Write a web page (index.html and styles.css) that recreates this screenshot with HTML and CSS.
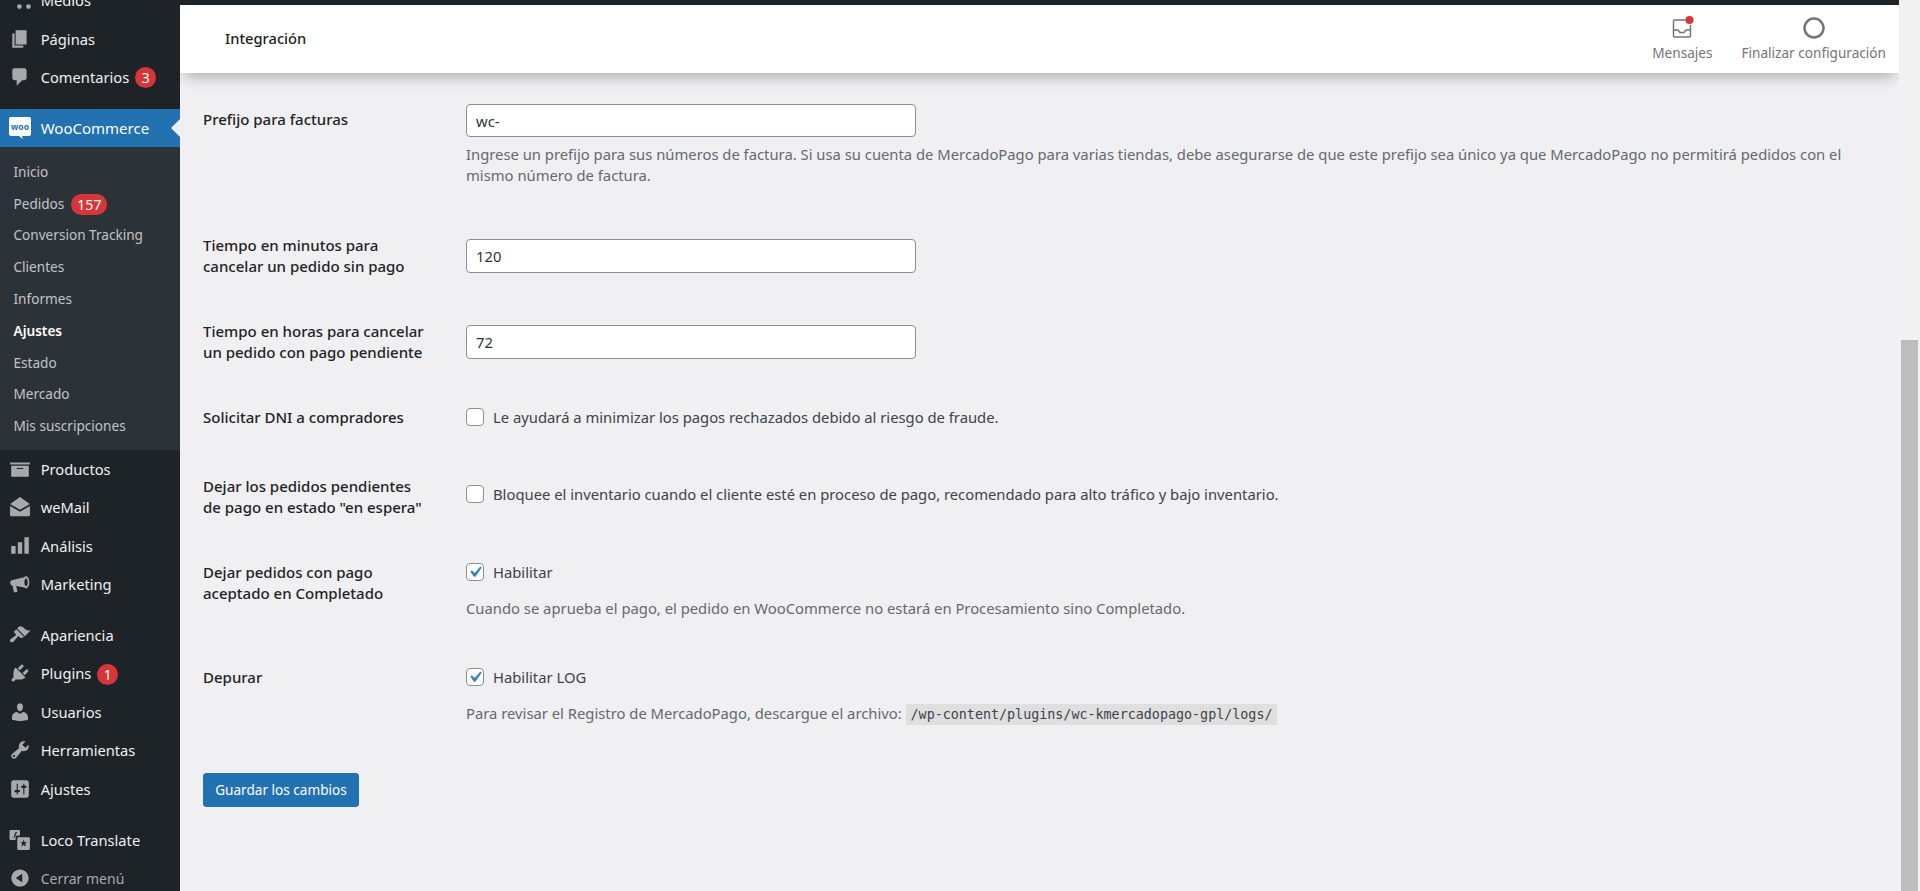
FILE: index.html
```html
<!DOCTYPE html>
<html lang="es">
<head>
<meta charset="utf-8">
<title>Integración</title>
<link rel="stylesheet" href="styles.css">
</head>
<body>
<div class="page">
  <nav class="sidebar">
    <ul class="menu">
      <li class="item"><svg class="ico" viewBox="0 0 20 20"><path d="M9.500 13.800a2.200 2.200 0 1 1 0 4.400 2.200 2.200 0 0 1 0-4.400zm8.200 0a2.200 2.200 0 1 1 0 4.400 2.200 2.200 0 0 1 0-4.400z"/></svg><span>Medios</span></li>
      <li class="item"><svg class="ico" viewBox="0 0 20 20"><path d="M6 15V2h10v13H6zm-1 1h8v2H3V5h2v11z"/></svg><span>Páginas</span></li>
      <li class="item"><svg class="ico" viewBox="0 0 20 20"><path d="M5 2h9c1.100 0 2 .9 2 2v7c0 1.100-.9 2-2 2h-2l-5 5v-5H5c-1.100 0-2-.9-2-2V4c0-1.100.9-2 2-2z"/></svg><span>Comentarios</span><b class="badge">3</b></li>
      <li class="sep"></li>
      <li class="item active"><svg class="ico" viewBox="0 0 22 22"><path class="woo-bg" d="M2 0h18a2 2 0 0 1 2 2v15a2 2 0 0 1-2 2h-7l1 3-4-3H2a2 2 0 0 1-2-2V2a2 2 0 0 1 2-2z"/><text class="woo-txt" x="11" y="12.500" text-anchor="middle">woo</text></svg><span>WooCommerce</span></li>
      <li>
        <ul class="submenu">
          <li>Inicio</li>
          <li>Pedidos<b class="badge badge-wide">157</b></li>
          <li>Conversion Tracking</li>
          <li>Clientes</li>
          <li>Informes</li>
          <li class="current">Ajustes</li>
          <li>Estado</li>
          <li>Mercado</li>
          <li>Mis suscripciones</li>
        </ul>
      </li>
      <li class="item"><svg class="ico" viewBox="0 0 20 20"><path d="M19 4v2H1V4h18zM2 7h16v10H2V7zm11 3V9H7v1h6z"/></svg><span>Productos</span></li>
      <li class="item"><svg class="ico" viewBox="0 0 20 20"><path d="M10 1 19 7.200 10 12.600 1 7.200zM1 9l9 5.400L19 9v8.500a1 1 0 0 1-1 1H2a1 1 0 0 1-1-1z"/></svg><span>weMail</span></li>
      <li class="item"><svg class="ico" viewBox="0 0 20 20"><path d="M2 10h4v7H2zM8 6.500h4V17H8zM14 2h4v15h-4z"/></svg><span>Análisis</span></li>
      <li class="item"><svg class="ico" viewBox="0 0 20 20"><path fill-rule="evenodd" d="M18.500 8.500c0 3-1.300 5.500-3 5.500-.6 0-1.200-.3-1.600-.8L6.500 11.800l1.300 5.200-3.300.8-1.400-6.400C1.800 11 1 10 1 8.800c0-1.300 1-2.300 2.500-2.500L13.700 3.800C14.200 3.300 14.800 3 15.500 3c1.700 0 3 2.500 3 5.500zM15.500 5c-.8 0-1.500 1.600-1.500 3.500s.7 3.500 1.500 3.500 1.500-1.600 1.500-3.500S16.300 5 15.500 5z"/></svg><span>Marketing</span></li>
      <li class="sep"></li>
      <li class="item"><svg class="ico" viewBox="0 0 20 20"><path d="M14.480 11.060 7.410 3.990l1.500-1.500c.5-.56 2.300-.47 3.510.32 1.210.8 1.430 1.280 2.910 2.100 1.180.64 2.450 1.260 4.450.85zm-.71.71L6.700 4.700 4.930 6.470c-.39.39-.39 1.020 0 1.410l1.060 1.060c.39.39.39 1.030 0 1.420-.6.6-1.430 1.110-2.210 1.690-.35.26-.7.53-1.010.84C1.430 13.230.1 15.010 1.290 16.200c1.190 1.200 2.980-.14 4-1.500.32-.31.58-.66.84-1.010.58-.78 1.090-1.610 1.690-2.210.39-.39 1.020-.39 1.410 0l1.060 1.060c.39.39 1.020.39 1.410 0z"/></svg><span>Apariencia</span></li>
      <li class="item"><svg class="ico" viewBox="0 0 20 20"><path d="M13.110 4.360 9.870 7.600 8 5.730l3.240-3.240c.35-.34 1.050-.2 1.560.32.52.51.66 1.210.31 1.550zm-8 1.770.91-1.120 9.010 9.010-1.190.84c-.71.71-2.630 1.160-3.820 1.160H6.140L4.900 17.260c-.59.59-1.540.59-2.120 0-.59-.58-.59-1.530 0-2.120l1.240-1.240v-3.880c0-1.130.4-3.190 1.090-3.890zm7.260 3.970 3.240-3.240c.34-.35 1.040-.21 1.550.31.52.51.66 1.210.31 1.550l-3.240 3.250z"/></svg><span>Plugins</span><b class="badge">1</b></li>
      <li class="item"><svg class="ico" viewBox="0 0 20 20"><path d="M10 9.250c-2.270 0-2.730-3.440-2.730-3.440C7 4.020 7.820 2 9.970 2c2.160 0 2.980 2.020 2.710 3.810 0 0-.41 3.440-2.680 3.440zm0 2.570L12.720 10c2.390 0 4.520 2.330 4.520 4.530v2.490s-3.650 1.130-7.240 1.130c-3.650 0-7.240-1.130-7.240-1.130v-2.490c0-2.250 1.940-4.480 4.470-4.480z"/></svg><span>Usuarios</span></li>
      <li class="item"><svg class="ico" viewBox="0 0 20 20"><path d="M16.680 9.770c-1.340 1.340-3.300 1.670-4.950.99l-5.410 6.520c-.99.99-2.590.99-3.580 0s-.99-2.590 0-3.570l6.520-5.420c-.68-1.650-.35-3.610.99-4.950 1.280-1.280 3.120-1.620 4.720-1.060l-2.890 2.890 2.820 2.820 2.860-2.870c.53 1.580.18 3.390-1.080 4.650zM3.810 16.210c.4.39 1.040.39 1.430 0 .4-.4.4-1.040 0-1.430-.39-.4-1.030-.4-1.430 0-.39.39-.39 1.030 0 1.430z"/></svg><span>Herramientas</span></li>
      <li class="item"><svg class="ico" viewBox="0 0 20 20"><path d="M18 16V4c0-1.100-.9-2-2-2H4c-1.100 0-2 .9-2 2v12c0 1.100.9 2 2 2h12c1.100 0 2-.9 2-2zM8 11h1c.55 0 1 .45 1 1s-.45 1-1 1H8v1.500c0 .28-.22.5-.5.5s-.5-.22-.5-.5V13H6c-.55 0-1-.45-1-1s.45-1 1-1h1V5.500c0-.28.22-.5.5-.5s.5.22.5.5V11zm5-2h-1c-.55 0-1-.45-1-1s.45-1 1-1h1V5.500c0-.28.22-.5.5-.5s.5.22.5.5V7h1c.55 0 1 .45 1 1s-.45 1-1 1h-1v5.500c0 .28-.22.5-.5.5s-.5-.22-.5-.5V9z"/></svg><span>Ajustes</span></li>
      <li class="sep"></li>
      <li class="item"><svg class="ico" viewBox="0 0 20 20"><path fill-rule="evenodd" d="M1.500 1H9a1 1 0 0 1 1 1v4H8a2 2 0 0 0-2 2v2H1.500a1 1 0 0 1-1-1V2a1 1 0 0 1 1-1zM4 7.800 6 2.800h1.300L5.300 7.800z"/><path fill-rule="evenodd" d="M8.500 7.500H18a1 1 0 0 1 1 1V18a1 1 0 0 1-1 1H8.500a1 1 0 0 1-1-1V8.500a1 1 0 0 1 1-1zm4.800 2L12.400 12H10l2 1.500-.8 2.500 2.100-1.500 2.100 1.500-.8-2.500 2-1.500h-2.400z"/></svg><span>Loco Translate</span></li>
      <li class="item collapse"><svg class="ico" viewBox="0 0 20 20"><path d="M10 2.160c4.330 0 7.840 3.510 7.840 7.840s-3.510 7.840-7.840 7.840S2.160 14.330 2.160 10 5.710 2.160 10 2.160zm2 11.720V6.120L6.180 9.970z"/></svg><span>Cerrar menú</span></li>
    </ul>
  </nav>

  <main class="main">
    <header class="topbar">
      <h1 class="title">Integración</h1>
      <div class="actions">
        <div class="action action-msg">
          <svg class="action-ico" viewBox="0 0 24 24"><path class="line" d="M16 4H4.500a1 1 0 0 0-1 1v15a1 1 0 0 0 1 1h15a1 1 0 0 0 1-1V9"/><path class="line" d="M3.500 14h4.500l2 2.500h4l2-2.500h4.500"/><circle class="dot" cx="19.500" cy="4" r="4"/></svg>
          <span>Mensajes</span>
        </div>
        <div class="action action-cfg">
          <svg class="action-ico" viewBox="0 0 24 24"><circle class="ring" cx="12" cy="12" r="9.500"/></svg>
          <span>Finalizar configuración</span>
        </div>
      </div>
    </header>

    <form class="form">
      <div class="row row-top gap-1">
        <label class="label">Prefijo para facturas</label>
        <div class="field">
          <input class="input input-first" type="text" value="wc-">
          <p class="help help-wrap">Ingrese un prefijo para sus números de factura. Si usa su cuenta de MercadoPago para varias tiendas, debe asegurarse de que este prefijo sea único ya que MercadoPago no permitirá pedidos con el mismo número de factura.</p>
        </div>
      </div>
      <div class="row gap-2">
        <label class="label">Tiempo en minutos para<br>cancelar un pedido sin pago</label>
        <div class="field"><input class="input" type="text" value="120"></div>
      </div>
      <div class="row gap-3">
        <label class="label">Tiempo en horas para cancelar<br>un pedido con pago pendiente</label>
        <div class="field"><input class="input" type="text" value="72"></div>
      </div>
      <div class="row gap-4">
        <label class="label">Solicitar DNI a compradores</label>
        <div class="field check-line"><input class="check" type="checkbox"><span>Le ayudará a minimizar los pagos rechazados debido al riesgo de fraude.</span></div>
      </div>
      <div class="row gap-5">
        <label class="label">Dejar los pedidos pendientes<br>de pago en estado "en espera"</label>
        <div class="field check-line check-raise"><input class="check" type="checkbox"><span>Bloquee el inventario cuando el cliente esté en proceso de pago, recomendado para alto tráfico y bajo inventario.</span></div>
      </div>
      <div class="row row-top gap-6">
        <label class="label label-flush">Dejar pedidos con pago<br>aceptado en Completado</label>
        <div class="field field-flush">
          <div class="check-line"><input class="check" type="checkbox" checked><span>Habilitar</span></div>
          <p class="help help-after">Cuando se aprueba el pago, el pedido en WooCommerce no estará en Procesamiento sino Completado.</p>
        </div>
      </div>
      <div class="row row-top gap-7">
        <label class="label label-flush">Depurar</label>
        <div class="field field-flush">
          <div class="check-line"><input class="check" type="checkbox" checked><span>Habilitar LOG</span></div>
          <p class="help help-after">Para revisar el Registro de MercadoPago, descargue el archivo: <code class="code">/wp-content/plugins/wc-kmercadopago-gpl/logs/</code></p>
        </div>
      </div>
      <button class="save" type="button">Guardar los cambios</button>
    </form>
  </main>

  <div class="scrollbar"><div class="thumb"></div></div>
</div>
</body>
</html>
```
FILE: styles.css
```css
* { box-sizing: border-box; }
html, body { margin: 0; height: 891px; overflow: hidden; }
body { background: #f0f0f2; font-family: "Noto Sans", "Open Sans", sans-serif; color: #3c434a; }
ul { list-style: none; margin: 0; padding: 0; }

.page { display: flex; height: 891px; overflow: hidden; }

/* sidebar */
.sidebar { width: 180px; flex: none; background: #1d2327; overflow: hidden; }
.menu { margin-top: -19px; }
.item { position: relative; display: flex; align-items: center; height: 38.400px; padding-left: 9px; color: #f0f0f1; font-size: 14.700px; white-space: nowrap; }
.ico { width: 22px; height: 22px; flex: none; margin-right: 9.700px; fill: #a7aaad; }
.sep { height: 12.800px; }
.active { background: #2271b1; color: #fff; font-size: 15px; }
.active::after { content: ""; position: absolute; right: 0; top: 50%; margin-top: -9px; border: 9px solid transparent; border-right-color: #f0f0f2; border-left-width: 0; }
.active .ico { fill: #fff; }
.woo-bg { fill: #fff; }
.woo-txt { fill: #2271b1; font: 700 8.500px "Noto Sans", sans-serif; }
.collapse { color: #a7aaad; font-size: 14px; }
.submenu { background: #2c3338; padding: 8px 0; color: #c3c4c7; font-size: 13.600px; }
.submenu li { display: flex; align-items: center; height: 31.800px; padding-left: 13.500px; white-space: nowrap; }
.submenu .current { color: #fff; font-weight: 600; }
.badge { display: inline-flex; align-items: center; justify-content: center; min-width: 21px; height: 21px; margin-left: 6px; padding: 0 6px; margin-top: 2px; border-radius: 11px; background: #d63638; color: #fff; font-size: 14px; font-weight: 400; }
.badge-wide { min-width: 34px; margin-left: 7px; }

/* main */
.main { flex: 1; min-width: 0; overflow: hidden; }
.topbar { position: relative; display: flex; align-items: center; justify-content: space-between; height: 73px; border-top: 5px solid #1d2327; background: #fff; box-shadow: 0 9px 13px -5px rgba(0, 0, 0, .28); }
.title { margin: 0 0 2px 45px; color: #1e1e1e; font-size: 14.700px; font-weight: 500; }
.actions { display: flex; gap: 29px; padding-right: 13px; color: #757575; font-size: 13.600px; }
.action { display: flex; flex-direction: column; align-items: center; }
.action-ico { width: 24px; height: 24px; margin-bottom: 3px; }
.line { fill: none; stroke: #757575; stroke-width: 1.500; }
.dot { fill: #d63638; }
.ring { fill: none; stroke: #757575; stroke-width: 2.500; }

/* form */
.form { padding: 31px 0 0 23px; }
.row { display: grid; grid-template-columns: 263px 1fr; align-items: center; }
.row-top { align-items: start; }
.label { color: #1d2327; font-size: 15px; font-weight: 500; line-height: 21px; }
.row-top .label { padding-top: 5px; }
.row-top .label-flush { padding-top: 0; }
.field-flush { padding-top: 1.500px; }
.gap-1 { margin-bottom: 49px; }
.gap-2 { margin-bottom: 44px; }
.gap-3 { margin-bottom: 44px; }
.gap-4 { margin-bottom: 48px; }
.gap-5 { margin-bottom: 44px; }
.gap-6 { margin-bottom: 48px; }
.gap-7 { margin-bottom: 49px; }
.input { display: block; width: 450px; height: 34px; padding: 0 9px; border: 1px solid #8c8f94; border-radius: 4px; background: #fff; color: #2c3338; font: 14.800px "Noto Sans", sans-serif; }
.input-first { height: 33px; }
.help { margin: 0; color: #646970; font-size: 14.800px; line-height: 21px; }
.help-wrap { margin-top: 6.500px; margin-right: 40px; }
.help-after { margin-top: 16.500px; }
.check-line { display: flex; align-items: center; gap: 9px; color: #3c434a; font-size: 14.800px; line-height: 18px; }
.check-raise { margin-top: -5px; }
.check { appearance: none; width: 18px; height: 18px; margin: 0; flex: none; border: 1px solid #8c8f94; border-radius: 4px; background: #fff center/22px no-repeat; }
.check:checked { background-image: url("data:image/svg+xml,%3Csvg xmlns='http://www.w3.org/2000/svg' viewBox='0 0 20 20'%3E%3Cpath fill='%233582c4' d='M14.830 4.890l1.340.94-5.810 8.380H9.020L5.780 9.670l1.340-1.250 2.570 2.400z'/%3E%3C/svg%3E"); }
.code { padding: 3px 5px; background: #dfdfe0; color: #3c434a; font: 13.360px "DejaVu Sans Mono", "Liberation Mono", monospace; }
.save { display: block; width: 156px; height: 34px; padding: 0; border: 1px solid #2271b1; border-radius: 3px; background: #2271b1; color: #fff; font: 13.600px "Noto Sans", sans-serif; }

/* scrollbar */
.scrollbar { width: 21px; flex: none; padding: 340px 2px 0; background: #f1f1f1; }
.thumb { height: 100%; background: #bdbdbd; }
```
